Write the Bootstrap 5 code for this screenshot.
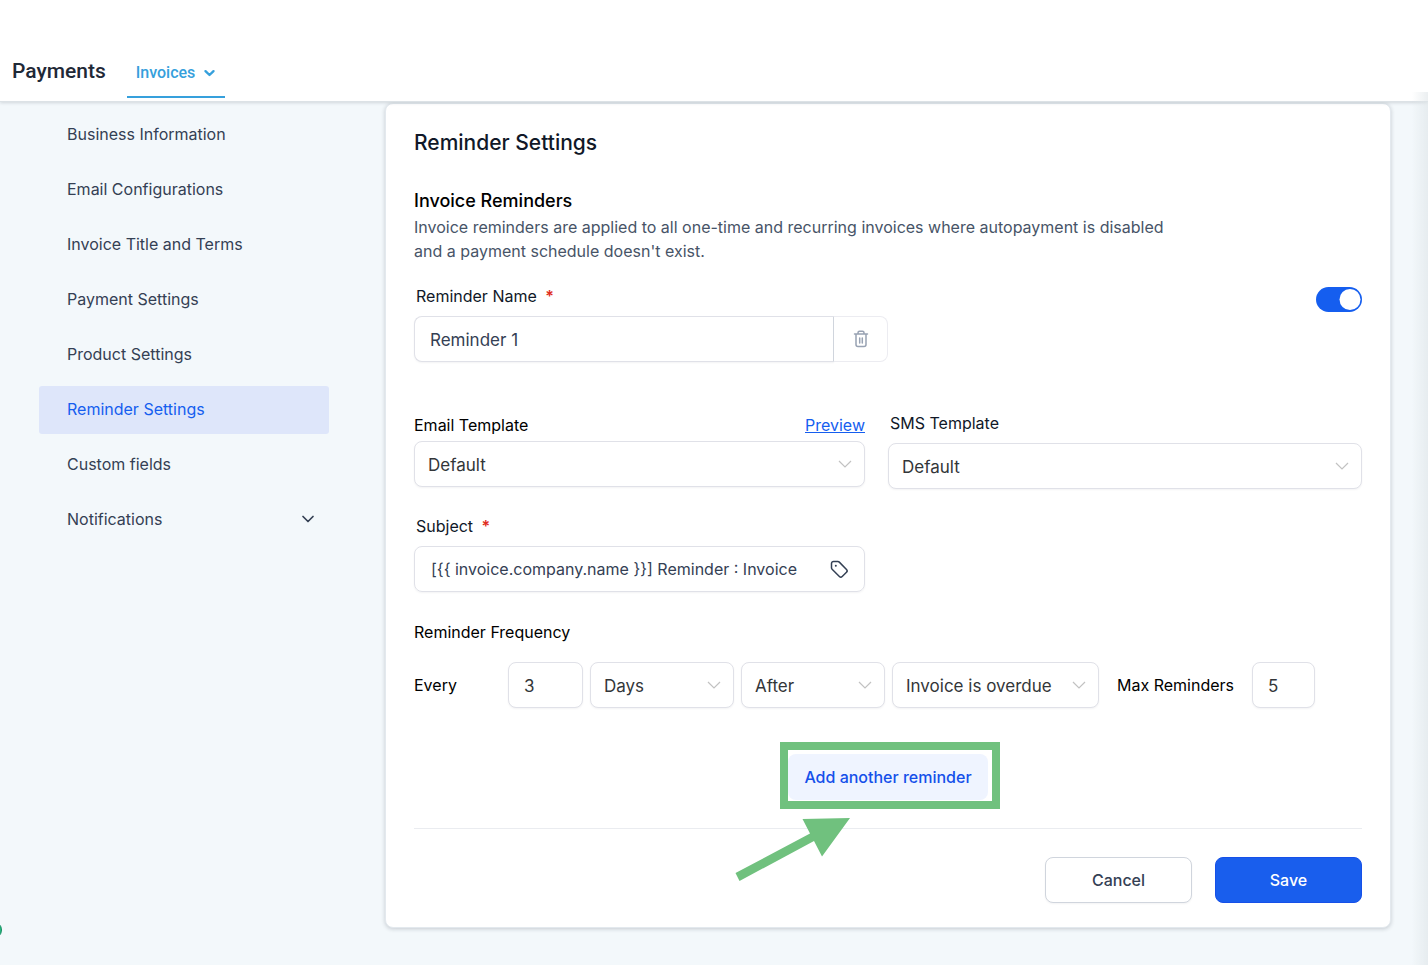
<!DOCTYPE html>
<html lang="en">
<head>
<meta charset="utf-8">
<meta name="viewport" content="width=device-width, initial-scale=1">
<title>Payments – Reminder Settings</title>
<link href="https://cdn.jsdelivr.net/npm/bootstrap@5.3.0/dist/css/bootstrap.min.css" rel="stylesheet">
<style>
  body { background: #f3f8fb; font-family: Inter, "Liberation Sans", sans-serif; font-size: 16px; line-height: 24px; color: #101828; min-height: 100vh; overflow-x: hidden; }
  .topbar { background: #fff; height: 102px; padding: 0 12px; gap: 21px; border-bottom: 1px solid #dce2e6; box-shadow: 0 1px 3px #10182826; font-family: Roboto, sans-serif; position: relative; }
  .topbar h1 { font-size: 21px; line-height: 28px; font-weight: 500; color: #1f2937; padding-bottom: 16px; }
  .tab-link { color: #36a0dc; font-size: 16px; font-weight: 500; padding: 0 9px 11px; border-bottom: 2px solid #36a0dc; text-decoration: none; margin-bottom: 3px; }
  .side { width: 385px; padding: 9px 56px 0 39px; }
  .side .nav { gap: 7px; }
  .side .nav-link { color: #344054; padding: 11px 12px 13px 28px; border-radius: 3px; }
  .side .nav-link.active { background: #dee6fa; color: #155eef; }
  .panel { border: 1px solid #e3e9ee; border-radius: 8px; box-shadow: 0 1px 4px #10182833; padding: 25px 28px 24px; margin: 1px 37px 37px 0; background: #fff; min-width: 0; }
  .panel h2 { font-size: 21px; line-height: 28px; font-weight: 500; margin-bottom: 32px; }
  .panel h3 { font-size: 18px; line-height: 24px; font-weight: 500; color: #000; margin-bottom: 2px; }
  .intro { color: #475467; max-width: 750px; margin-bottom: 21px; }
  .field-label { display: inline-block; margin-bottom: 8px; padding-left: 2px; }
  .flush { padding-left: 0; color: #000; }
  .req { color: #e02d20; font-weight: 600; margin-left: 4px; }
  .panel .form-control, .panel .form-select { height: 46px; border: 1px solid #e0e1e8; border-radius: 8px; font-size: 17px; line-height: 24px; color: #344054; box-shadow: 0 1px 2px #1018280d; padding: 11px 15px 9px; }
  .panel .form-select { color: #333639; padding-left: 13px; background-image: url("data:image/svg+xml,%3Csvg xmlns='http://www.w3.org/2000/svg' viewBox='0 0 14 14' fill='none' stroke='%23c2c2c2' stroke-width='1.2'%3E%3Cpath d='M1 4l6 6 6-6'/%3E%3C/svg%3E"); background-size: 14px 14px; background-position: right 12px center; }
  .panel .name-box { border-radius: 8px 0 0 8px; border-right-color: #d0d5dd; }
  .trash { width: 54px; border: 1px solid #ececf1; border-left: 0; border-radius: 0 8px 8px 0; background: #fff; color: #98a2b3; }
  .form-check-input.toggle { width: 46px; height: 25px; margin: 3px 0 0; border: 0; background-color: #155eef; background-size: 23px 23px; box-shadow: none;
    background-image: url("data:image/svg+xml,%3Csvg xmlns='http://www.w3.org/2000/svg' viewBox='0 0 23 23'%3E%3Ccircle cx='11' cy='11.5' r='10.5' fill='white'/%3E%3C/svg%3E"); background-position: right center; }
  .name-row { margin-bottom: 49px; }
  .tpl-row { margin-bottom: 25px; }
  .mail-col { padding: 2px 23px 0 0; }
  .mail-head { margin-bottom: 4px; color: #000; }
  .mail-head a { color: #155eef; }
  .subject-box { border: 1px solid #e0e1e8; border-radius: 8px; box-shadow: 0 1px 2px #1018280d; height: 46px; padding: 0 15px 0 16px; margin-right: 23px; }
  .panel .subject-input { border: 0; box-shadow: none; padding: 0; height: 44px; font-size: 16px; background: none; min-width: 0; }
  .tag-btn { border: 0; background: none; padding: 0; margin-left: 26px; color: #344054; }
  .freq { gap: 7px; color: #000; margin: 18px 0 46px; }
  .freq .form-control, .freq .form-select { color: #333639; }
  .w-every { width: 87px; } .w-num { width: 75px; } .w-sel { width: 144px; } .w-when { width: 207px; } .w-max { width: 63px; }
  .max-label { margin: 0 11px; }
  .add-btn { background: #eff4ff; color: #1550ea; font-weight: 500; font-size: 16px; line-height: 24px; border: 0; border-radius: 8px; padding: 11px 16px; }
  .callout { position: absolute; inset: -12px -12px -9px -8px; border: 8px solid #70c17e; pointer-events: none; }
  .callout-arrow { position: absolute; left: -54px; top: 63px; pointer-events: none; }
  .rule { border-top: 1px solid #eaecf0; margin: 28px 0; }
  .acts { gap: 23px; }
  .act { width: 147px; height: 46px; border-radius: 8px; font-weight: 500; font-size: 16px; }
  .act-cancel { background: #fff; border: 1px solid #d0d5dd; color: #344054; box-shadow: 0 1px 2px #1018280d; }
  .act-save { background: #195eed; border: 1px solid #1650e8; color: #fff; }
  .edge { position: fixed; right: 0; top: 92px; bottom: 0; width: 16px; background: linear-gradient(to right, #e8ecee00, #dfe5e8a0); pointer-events: none; }
  .bubble { position: fixed; left: -16px; bottom: 26px; width: 18px; height: 18px; border-radius: 50%; background: #27bd82; border: 1px solid #168a60; }
</style>
</head>
<body>
<header class="topbar d-flex align-items-end">
  <h1 class="mb-0">Payments</h1>
  <a class="tab-link d-flex align-items-center" href="#">Invoices
    <svg class="ms-2" width="13" height="12" viewBox="0 0 13 12" fill="none" stroke="currentColor" stroke-width="2.4" stroke-linecap="round" stroke-linejoin="round"><path d="M2.5 4.2 6.5 8l4-3.8"/></svg>
  </a>
</header>

<div class="d-flex">
  <aside class="side flex-shrink-0">
    <nav class="nav flex-column">
      <a class="nav-link" href="#">Business Information</a>
      <a class="nav-link" href="#">Email Configurations</a>
      <a class="nav-link" href="#">Invoice Title and Terms</a>
      <a class="nav-link" href="#">Payment Settings</a>
      <a class="nav-link" href="#">Product Settings</a>
      <a class="nav-link active" aria-current="page" href="#">Reminder Settings</a>
      <a class="nav-link" href="#">Custom fields</a>
      <a class="nav-link d-flex justify-content-between align-items-center" href="#">Notifications
        <svg width="18" height="18" viewBox="0 0 18 18" fill="none" stroke="currentColor" stroke-width="1.7" stroke-linecap="round" stroke-linejoin="round"><path d="m4 6.5 5 5 5-5"/></svg>
      </a>
    </nav>
  </aside>

  <main class="panel flex-grow-1">
    <h2>Reminder Settings</h2>
    <h3>Invoice Reminders</h3>
    <p class="intro">Invoice reminders are applied to all one-time and recurring invoices where autopayment is disabled and a payment schedule doesn't exist.</p>

    <div class="name-row d-flex justify-content-between align-items-start">
      <div class="w-50">
        <label class="field-label" for="rname">Reminder Name <span class="req">*</span></label>
        <div class="d-flex">
          <input class="form-control name-box" id="rname" type="text" value="Reminder 1">
          <button class="trash flex-shrink-0 d-flex align-items-center justify-content-center" type="button" aria-label="Delete reminder">
            <svg width="16" height="18" viewBox="0 0 16 18" fill="none" stroke="currentColor" stroke-width="1.5" stroke-linecap="round" stroke-linejoin="round"><path d="M1.500 4h13M3 4v10.500a2 2 0 0 0 2 2h6a2 2 0 0 0 2-2V4M5 4V2.700A1.500 1.500 0 0 1 6.500 1.200h3A1.500 1.500 0 0 1 11 2.700V4M6.700 8v5M9.300 8v5"/></svg>
          </button>
        </div>
      </div>
      <div class="form-check form-switch p-0 m-0">
        <input class="form-check-input toggle float-none d-block" type="checkbox" role="switch" aria-label="Enable reminder" checked>
      </div>
    </div>

    <div class="tpl-row row g-0">
      <div class="col-6 mail-col">
        <div class="mail-head d-flex justify-content-between"><label for="mailtpl">Email Template</label><a href="#">Preview</a></div>
        <select class="form-select" id="mailtpl"><option>Default</option></select>
      </div>
      <div class="col-6">
        <label class="field-label" for="smstpl">SMS Template</label>
        <select class="form-select" id="smstpl"><option>Default</option></select>
      </div>
    </div>

    <div class="w-50 mb-4 pb-1">
      <label class="field-label" for="subj">Subject <span class="req">*</span></label>
      <div class="subject-box d-flex align-items-center">
        <input class="form-control subject-input" id="subj" type="text" value="[{{ invoice.company.name }}] Reminder : Invoice">
        <button class="tag-btn flex-shrink-0 d-flex" type="button" aria-label="Insert custom value">
          <svg width="19" height="19" viewBox="0 0 19 19" fill="none" stroke="currentColor" stroke-width="1.5" stroke-linejoin="round" stroke-linecap="round"><path d="M1.500 3.500v4.300a2 2 0 0 0 .6 1.400l7.300 7.300a2 2 0 0 0 2.800 0l4.300-4.300a2 2 0 0 0 0-2.800L9.300 2.100a2 2 0 0 0-1.400-.6H3.500a2 2 0 0 0-2 2z"/><path d="M5.800 5.800h.01" stroke-width="2"/></svg>
        </button>
      </div>
    </div>

    <div class="flush">Reminder Frequency</div>
    <div class="freq d-flex align-items-center">
      <label class="w-every" for="every">Every</label>
      <input class="form-control w-num" id="every" type="text" inputmode="numeric" value="3">
      <select class="form-select w-sel" aria-label="Unit"><option>Days</option></select>
      <select class="form-select w-sel" aria-label="Before or after"><option>After</option></select>
      <select class="form-select w-when" aria-label="Event"><option>Invoice is overdue</option></select>
      <label class="max-label text-nowrap" for="maxr">Max Reminders</label>
      <input class="form-control w-max" id="maxr" type="text" inputmode="numeric" value="5">
    </div>

    <div class="text-center">
      <div class="position-relative d-inline-flex">
        <button class="add-btn" type="button">Add another reminder</button>
        <span class="callout"></span>
        <svg class="callout-arrow" width="118" height="66" viewBox="0 0 118 66"><path fill="#70c17e" d="M116 1 88 39.500 80 24 5.500 64 1.500 56 76 16.500 68.500 2z"/></svg>
      </div>
    </div>

    <div class="rule"></div>
    <div class="acts d-flex justify-content-end">
      <button class="act act-cancel" type="button">Cancel</button>
      <button class="act act-save" type="button">Save</button>
    </div>
  </main>
</div>
<div class="edge"></div>
<div class="bubble"></div>
<script src="https://cdn.jsdelivr.net/npm/bootstrap@5.3.0/dist/js/bootstrap.bundle.min.js"></script>
</body>
</html>
